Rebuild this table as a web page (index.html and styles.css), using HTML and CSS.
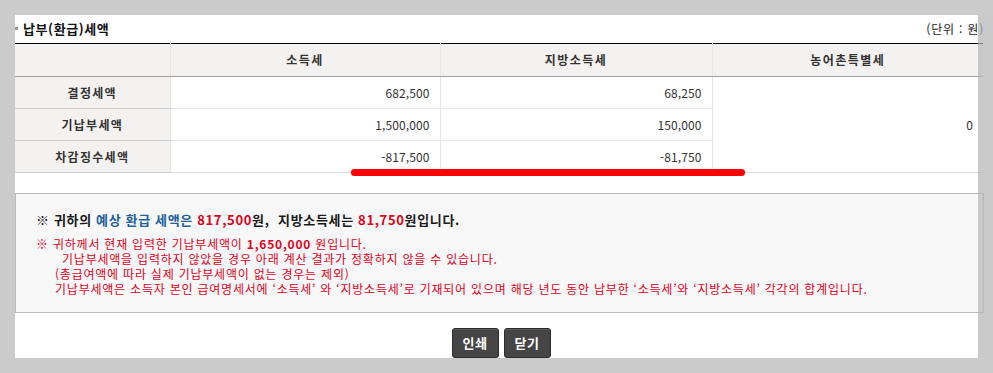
FILE: index.html
```html
<!DOCTYPE html>
<html lang="ko">
<head>
<meta charset="utf-8">
<title>납부(환급)세액</title>
<link rel="stylesheet" href="styles.css">
</head>
<body>
<div class="panel">
  <div class="content">
    <div class="title-bar">
      <h2 class="title"><span class="bullet"></span>납부(환급)세액</h2>
      <span class="unit">(단위 : 원)</span>
    </div>
    <table class="tax-table">
      <colgroup>
        <col class="c1"><col class="c2"><col class="c3"><col class="c4">
      </colgroup>
      <thead>
        <tr>
          <th class="corner"></th>
          <th>소득세</th>
          <th>지방소득세</th>
          <th>농어촌특별세</th>
        </tr>
      </thead>
      <tbody>
        <tr>
          <th class="label">결정세액</th>
          <td>682,500</td>
          <td>68,250</td>
          <td class="span" rowspan="3">0</td>
        </tr>
        <tr>
          <th class="label">기납부세액</th>
          <td>1,500,000</td>
          <td>150,000</td>
        </tr>
        <tr class="last">
          <th class="label">차감징수세액</th>
          <td>-817,500</td>
          <td>-81,750</td>
        </tr>
      </tbody>
    </table>
    <div class="mark"></div>
    <div class="notice">
      <p class="summary">※ 귀하의 <span class="blue">예상 환급 세액은</span> <span class="red">817,500</span>원, &nbsp;지방소득세는 <span class="red">81,750</span>원입니다.</p>
      <div class="warn">
        <p>※ 귀하께서 현재 입력한 기납부세액이 <b>1,650,000</b> 원입니다.</p>
        <p class="ind1">기납부세액을 입력하지 않았을 경우 아래 계산 결과가 정확하지 않을 수 있습니다.</p>
        <p class="ind2">(총급여액에 따라 실제 기납부세액이 없는 경우는 제외)</p>
        <p class="ind2">기납부세액은 소득자 본인 급여명세서에 ‘소득세’ 와 ‘지방소득세’로 기재되어 있으며 해당 년도 동안 납부한 ‘소득세’와 ‘지방소득세’ 각각의 합계입니다.</p>
      </div>
    </div>
    <div class="buttons">
      <button class="btn" type="button">인쇄</button>
      <button class="btn" type="button">닫기</button>
    </div>
  </div>
  <div class="scroll-shade"></div>
</div>
</body>
</html>
```
FILE: styles.css
```css
html, body {
  margin: 0;
  padding: 0;
}
body {
  background: #cbcbcb;
  font-family: "Noto Sans CJK KR", "Noto Sans", sans-serif;
  font-size: 12px;
  color: #333;
}
.panel {
  position: relative;
  margin: 15px 0 0 15px;
  height: 343px;
  background: #fff;
  overflow: hidden;
}
.content {
  position: relative;
  width: 968px;
}
.title-bar {
  height: 28px;
  display: flex;
  align-items: center;
  justify-content: space-between;
}
.title {
  margin: 0;
  display: flex;
  align-items: center;
  gap: 5px;
  font-size: 13px;
  font-weight: bold;
  color: #111;
  line-height: 16px;
  letter-spacing: 0.6px;
}
.bullet {
  width: 3px;
  height: 3px;
  background: #999;
  margin-top: -2px;
}
.unit {
  font-size: 12px;
  color: #222;
  line-height: 16px;
  letter-spacing: 0.8px;
  margin-right: -1px;
}
.tax-table {
  width: 968px;
  table-layout: fixed;
  border-collapse: collapse;
  border-top: 1px solid #000;
}
.c1 { width: 155px; }
.c2 { width: 270px; }
.c3 { width: 272px; }
.c4 { width: 271px; }
.tax-table th,
.tax-table td {
  padding: 0 10px;
  height: 31px;
  line-height: 16px;
  border-bottom: 1px solid #e6e6e6;
  border-left: 1px solid #e6e6e6;
}
.tax-table thead th {
  height: 32px;
  background: #f3f2f0;
  font-weight: bold;
  color: #333;
  text-align: center;
  letter-spacing: 1.5px;
  border-bottom: 1px solid #a0a0a0;
}
.tax-table thead th.corner,
.tax-table th.label {
  border-left: none;
}
.tax-table th.label {
  background: #f3f2f0;
  font-weight: bold;
  text-align: center;
  color: #333;
  letter-spacing: 1.3px;
  border-bottom-color: #cfcfcf;
}
.tax-table td {
  text-align: right;
  color: #333;
  letter-spacing: 0.1px;
}
.tax-table td.span {
  vertical-align: middle;
}
.tax-table tr.last td,
.tax-table td.span {
  border-bottom-color: #e0e0e0;
}
.mark {
  position: absolute;
  left: 336px;
  top: 154px;
  width: 394px;
  height: 7px;
  background: #ff0000;
  border-radius: 4px;
}
.notice {
  margin-top: 20px;
  width: 969px;
  box-sizing: border-box;
  border: 1px solid #bbb;
  background: #f8f8f8;
  padding: 18px 20px 16px 20px;
}
.notice p {
  margin: 0;
}
.summary {
  font-size: 13px;
  font-weight: bold;
  line-height: 15px;
  color: #1a1a1a;
  letter-spacing: 0.65px;
}
.summary .blue {
  color: #22609c;
}
.summary .red {
  color: #e0001a;
}
.warn {
  margin-top: 9px;
  color: #e0001a;
  font-size: 12px;
  line-height: 15px;
  letter-spacing: 0.78px;
}
.warn .ind1 {
  padding-left: 26px;
}
.warn .ind2 {
  padding-left: 19px;
}
.buttons {
  margin-top: 15px;
  display: flex;
  justify-content: center;
  gap: 5px;
  padding-left: 4px;
}
.btn {
  width: 47px;
  height: 30px;
  padding: 0;
  border: 1px solid #2b2b2b;
  border-radius: 3px;
  background: #454545;
  box-shadow: inset 0 1px 0 #5a5a5a;
  color: #fff;
  font-family: "Noto Sans CJK KR", "Noto Sans", sans-serif;
  font-size: 13px;
  font-weight: bold;
  line-height: 16px;
  letter-spacing: 0.5px;
}
.scroll-shade {
  position: absolute;
  top: 0;
  bottom: 0;
  left: 963px;
  right: 0;
  background: rgba(180, 180, 180, 0.7);
}
```
